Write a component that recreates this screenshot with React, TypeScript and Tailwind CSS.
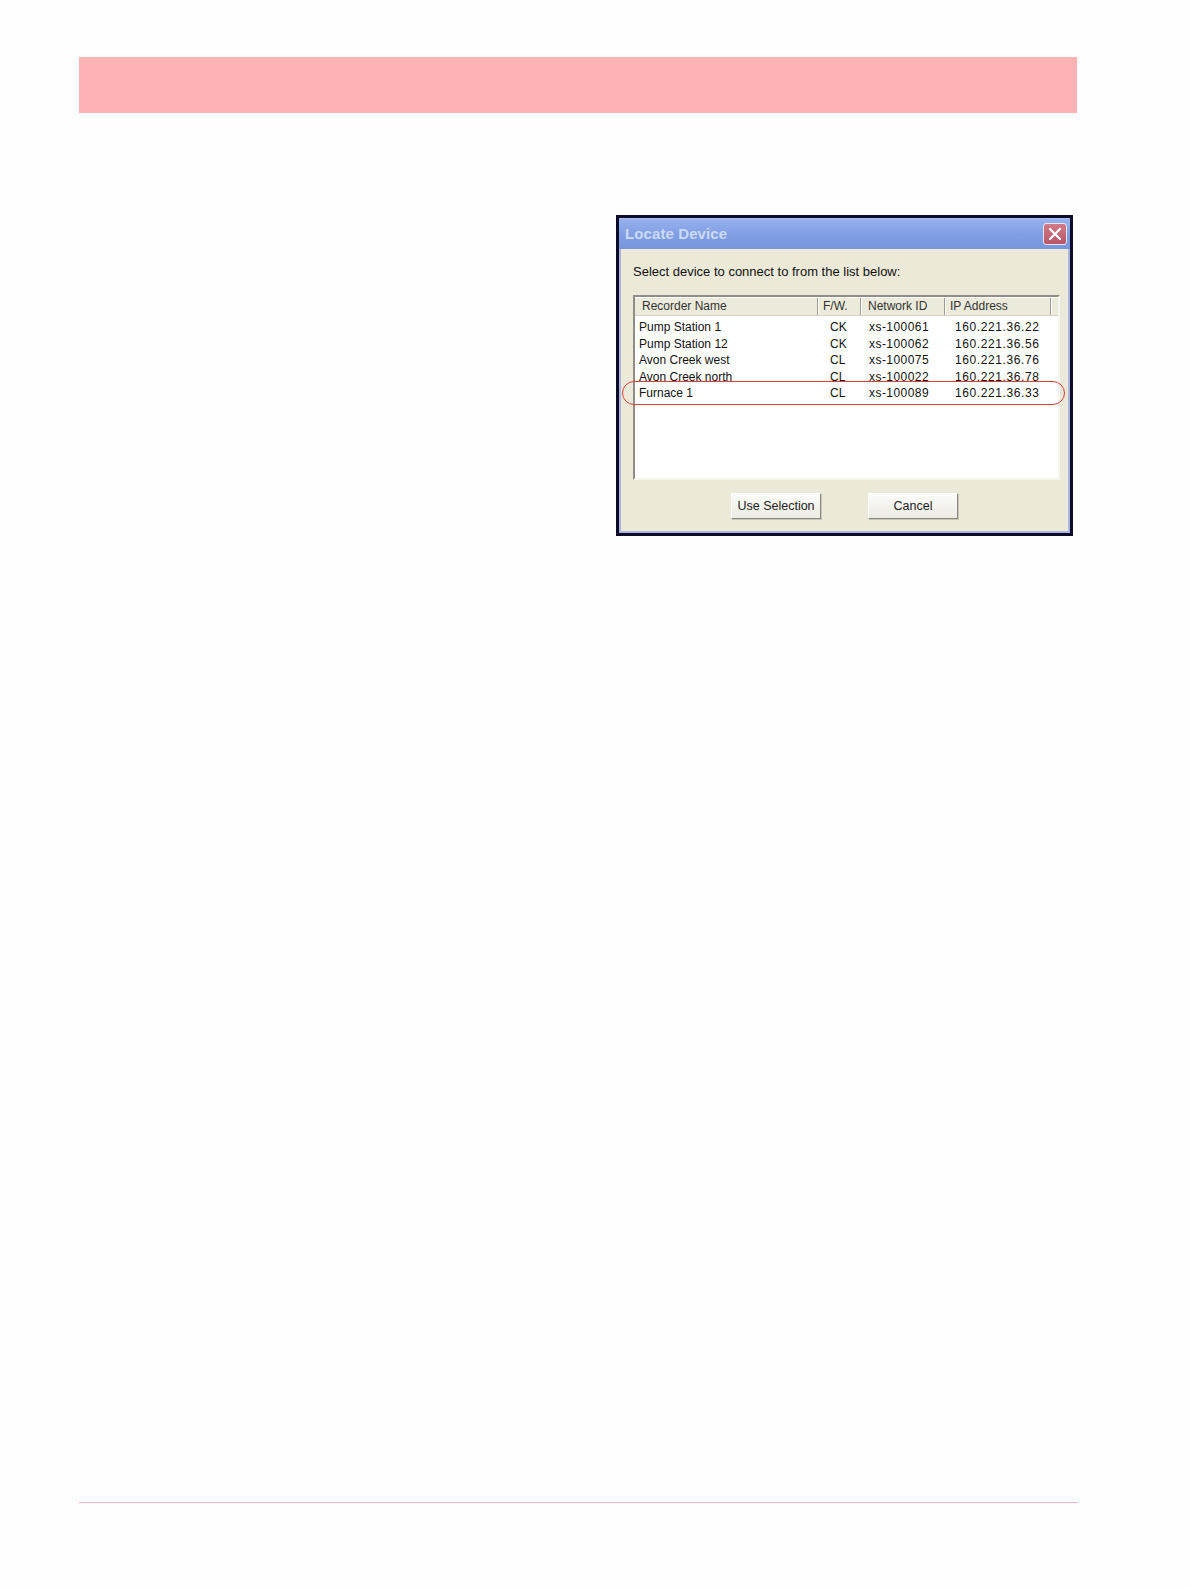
import * as React from "react";

const columns = [
  { label: "Recorder Name", width: "w-[183px]", head: "pl-[7px]", cell: "pl-[4px]" },
  { label: "F/W.", width: "w-[43px]", head: "pl-[5px]", cell: "pl-[12px]" },
  { label: "Network ID", width: "w-[84px]", head: "pl-[7px]", cell: "pl-[8px] tracking-[0.45px]" },
  { label: "IP Address", width: "w-[106px]", head: "pl-[5px]", cell: "pl-[10px] tracking-[0.6px]" },
];

const devices = [
  ["Pump Station 1", "CK", "xs-100061", "160.221.36.22"],
  ["Pump Station 12", "CK", "xs-100062", "160.221.36.56"],
  ["Avon Creek west", "CL", "xs-100075", "160.221.36.76"],
  ["Avon Creek north", "CL", "xs-100022", "160.221.36.78"],
  ["Furnace 1", "CL", "xs-100089", "160.221.36.33"],
];

function XpButton({ children }: { children: React.ReactNode }) {
  return (
    <button className="flex h-[26px] w-[90px] items-center justify-center border border-t-[#ffffff] border-l-[#ffffff] border-r-[#8a8a84] border-b-[#8a8a84] bg-gradient-to-b from-[#fbfbf8] to-[#ecebe4] text-[12.5px] text-[#222] shadow-[1px_1px_0_#c8c6b8]">
      {children}
    </button>
  );
}

function LocateDevice() {
  return (
    <div className="w-[457px] border-[3px] border-[#0c0c28] bg-[#7f9ae0]">
      {/* title bar */}
      <div className="flex h-[31px] items-center justify-between border-t border-[#a9bff2] bg-gradient-to-b from-[#97b1ee] via-[#829fe4] to-[#7795dc] pl-[6px] pr-[3px]">
        <span className="text-[15px] font-bold tracking-[0.1px] text-[#cbdaf7]">
          Locate Device
        </span>
        <span className="flex h-[22px] w-[24px] items-center justify-center rounded-[3px] border border-[#e4e6f2] bg-gradient-to-b from-[#d27c88] to-[#b65666]">
          <svg width="14" height="14" viewBox="0 0 14 14">
            <path d="M2 2 L12 12 M12 2 L2 12" stroke="#ffffff" strokeWidth="2.2" strokeLinecap="round" />
          </svg>
        </span>
      </div>

      {/* body */}
      <div className="relative border-x-2 border-b-2 border-[#a9b5dd] bg-[#ece9d8] px-[9px] pb-[12px] pl-[12px] pt-[15px]">
        <div className="mb-[15px] text-[13px] leading-[16px] text-[#111]">
          Select device to connect to from the list below:
        </div>

        <div className="h-[185px] w-[427px] border-2 border-t-[#8e8d86] border-l-[#8e8d86] border-r-[#f6f5ef] border-b-[#f6f5ef] bg-white">
          <div className="flex h-[19px] border-b border-[#d5d2c2] border-t border-t-white bg-[#ebeadb] text-[12px] leading-[17px] text-[#333]">
            {columns.map((c) => (
              <div
                key={c.label}
                className={`${c.width} ${c.head} shrink-0 whitespace-nowrap border-r border-r-[#9c9b94] shadow-[1px_0_0_#ffffff]`}
              >
                {c.label}
              </div>
            ))}
            <div className="flex-1" />
          </div>
          <div className="pt-[3px]">
            {devices.map((row) => (
              <div key={row[2]} className="flex h-[16.5px] items-center text-[12px] text-[#111]">
                {row.map((v, i) => (
                  <div key={i} className={`${columns[i].width} ${columns[i].cell} shrink-0 whitespace-nowrap`}>
                    {v}
                  </div>
                ))}
              </div>
            ))}
          </div>
        </div>

        <div className="mt-[13px] flex justify-center gap-[47px] pr-[3px]">
          <XpButton>Use Selection</XpButton>
          <XpButton>Cancel</XpButton>
        </div>

        {/* highlight around the chosen device */}
        <div className="pointer-events-none absolute left-[1px] top-[132px] h-[24px] w-[443px] rounded-[12px] border border-[#e23c3c]" />
      </div>
    </div>
  );
}

export default function App() {
  return (
    <div className="flex min-h-[1588px] flex-col bg-[#fefefe] font-['Liberation_Sans',Arial,sans-serif]">
      <div className="ml-[79px] mt-[57px] h-[56px] w-[998px] bg-[#ffb3b5]" />
      <div className="ml-[616px] mt-[102px]">
        <LocateDevice />
      </div>
      <div className="mb-[85px] ml-[79px] mt-auto h-px w-[999px] bg-[#f0b9b9]" />
    </div>
  );
}
